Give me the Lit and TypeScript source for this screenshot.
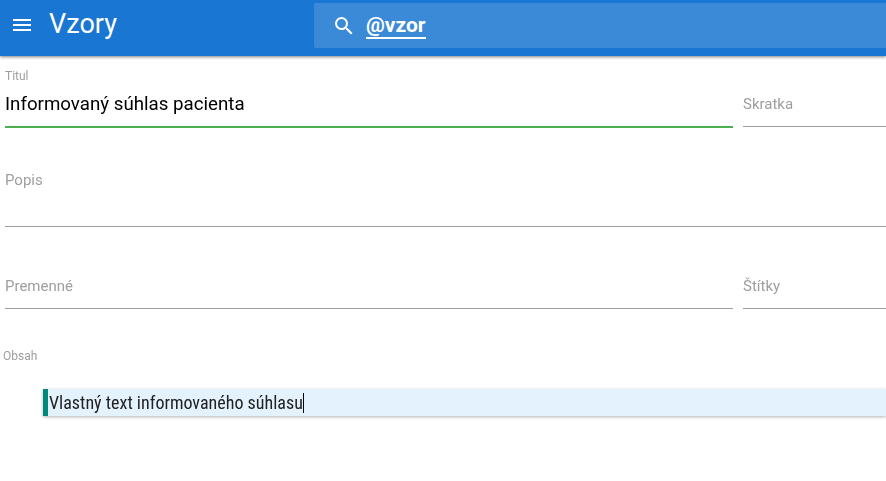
import { LitElement, html, css } from "lit";
import { customElement } from "lit/decorators.js";

@customElement("app-root")
export class AppRoot extends LitElement {
  static styles = css`
    :host { display: block; width: 886px; height: 481px; overflow: hidden; background: #fff; font-family: Roboto, sans-serif; }
    .bar { display: flex; height: 56px; background: #1976d2; box-shadow: 0 1px 3px rgba(0,0,0,.5); position: relative; }
    .menu { width: 24px; height: 24px; margin: 13px 0 0 10px; fill: #fff; }
    .title { color: #fff; font-size: 27px; line-height: 48px; margin-left: 15px; width: 265px; }
    .search { flex: 1; height: 45px; margin-top: 3px; background: rgba(255,255,255,.15); border-radius: 2px 0 0 2px; display: flex; align-items: center; }
    .search svg { width: 24px; height: 24px; fill: #fff; margin-left: 18px; }
    .q { color: #fff; font-size: 21px; font-weight: 700; margin-left: 10px; border-bottom: 2px solid #fff; line-height: 24px; }
    .form { padding: 0 0 0 5px; display: flex; flex-direction: column; will-change: transform; }
    .row { display: flex; gap: 10px; }
    .f { flex: none; width: 143px; display: flex; flex-direction: column; justify-content: flex-end; border-bottom: 1px solid #9e9e9e; box-sizing: border-box; color: #9e9e9e; }
    .f.grow { flex: 1; width: auto; }
    .f.wide { width: 728px; }
    .ph { font-size: 15px; line-height: 17px; }
    .small { font-size: 12px; line-height: 14px; color: #9e9e9e; }
    .r1 { height: 72px; }
    .r1 .f { padding-bottom: 13px; margin-bottom: 1px; }
    .t { border-bottom: 2px solid #4caf50; width: 728px; flex: none; display: flex; flex-direction: column; box-sizing: border-box; }
    .t .small { margin-top: 13px; }
    .t .v { font-size: 18.72px; color: #000; line-height: 24px; margin-top: 9px; }
    .f.popis { flex: none; width: auto; height: 99px; padding-bottom: 37px; }
    .r3 { height: 82px; }
    .r3 .f { padding-bottom: 13px; }
    .obsah { margin: 40px 0 0 -2px; font-size: 12px; line-height: 14px; color: #9e9e9e; }
    .line { margin: 26px 0 0 38px; height: 27px; background: #e3f2fd; border-left: 5px solid #00897b; box-shadow: 0 1px 3px rgba(0,0,0,.3); display: flex; align-items: center; font-size: 18px; color: #212121; font-stretch: condensed; }
    .line span { border-right: 1px solid #000; line-height: 20px; margin-left: 1px; }
  `;
  render() {
    return html`
      <div class="bar">
        <svg class="menu" viewBox="0 0 24 24"><path d="M3 18h18v-2H3v2zm0-5h18v-2H3v2zm0-7v2h18V6H3z"/></svg>
        <div class="title">Vzory</div>
        <div class="search">
          <svg viewBox="0 0 24 24"><path d="M15.5 14h-.79l-.28-.27A6.47 6.47 0 0 0 16 9.5 6.5 6.5 0 1 0 9.5 16c1.61 0 3.09-.59 4.23-1.57l.27.28v.79l5 4.99L20.49 19l-4.99-5zm-6 0C7.01 14 5 11.99 5 9.5S7.01 5 9.5 5 14 7.01 14 9.5 11.99 14 9.5 14z"/></svg>
          <span class="q">@vzor</span>
        </div>
      </div>
      <div class="form">
        <div class="row r1">
          <div class="t"><div class="small">Titul</div><div class="v">Informovaný súhlas pacienta</div></div>
          <div class="f grow"><div class="ph">Skratka</div></div>
        </div>
        <div class="f popis"><div class="ph">Popis</div></div>
        <div class="row r3">
          <div class="f wide"><div class="ph">Premenné</div></div>
          <div class="f grow"><div class="ph">Štítky</div></div>
        </div>
        <div class="obsah">Obsah</div>
        <div class="line"><span>Vlastný text informovaného súhlasu</span></div>
      </div>
    `;
  }
}
